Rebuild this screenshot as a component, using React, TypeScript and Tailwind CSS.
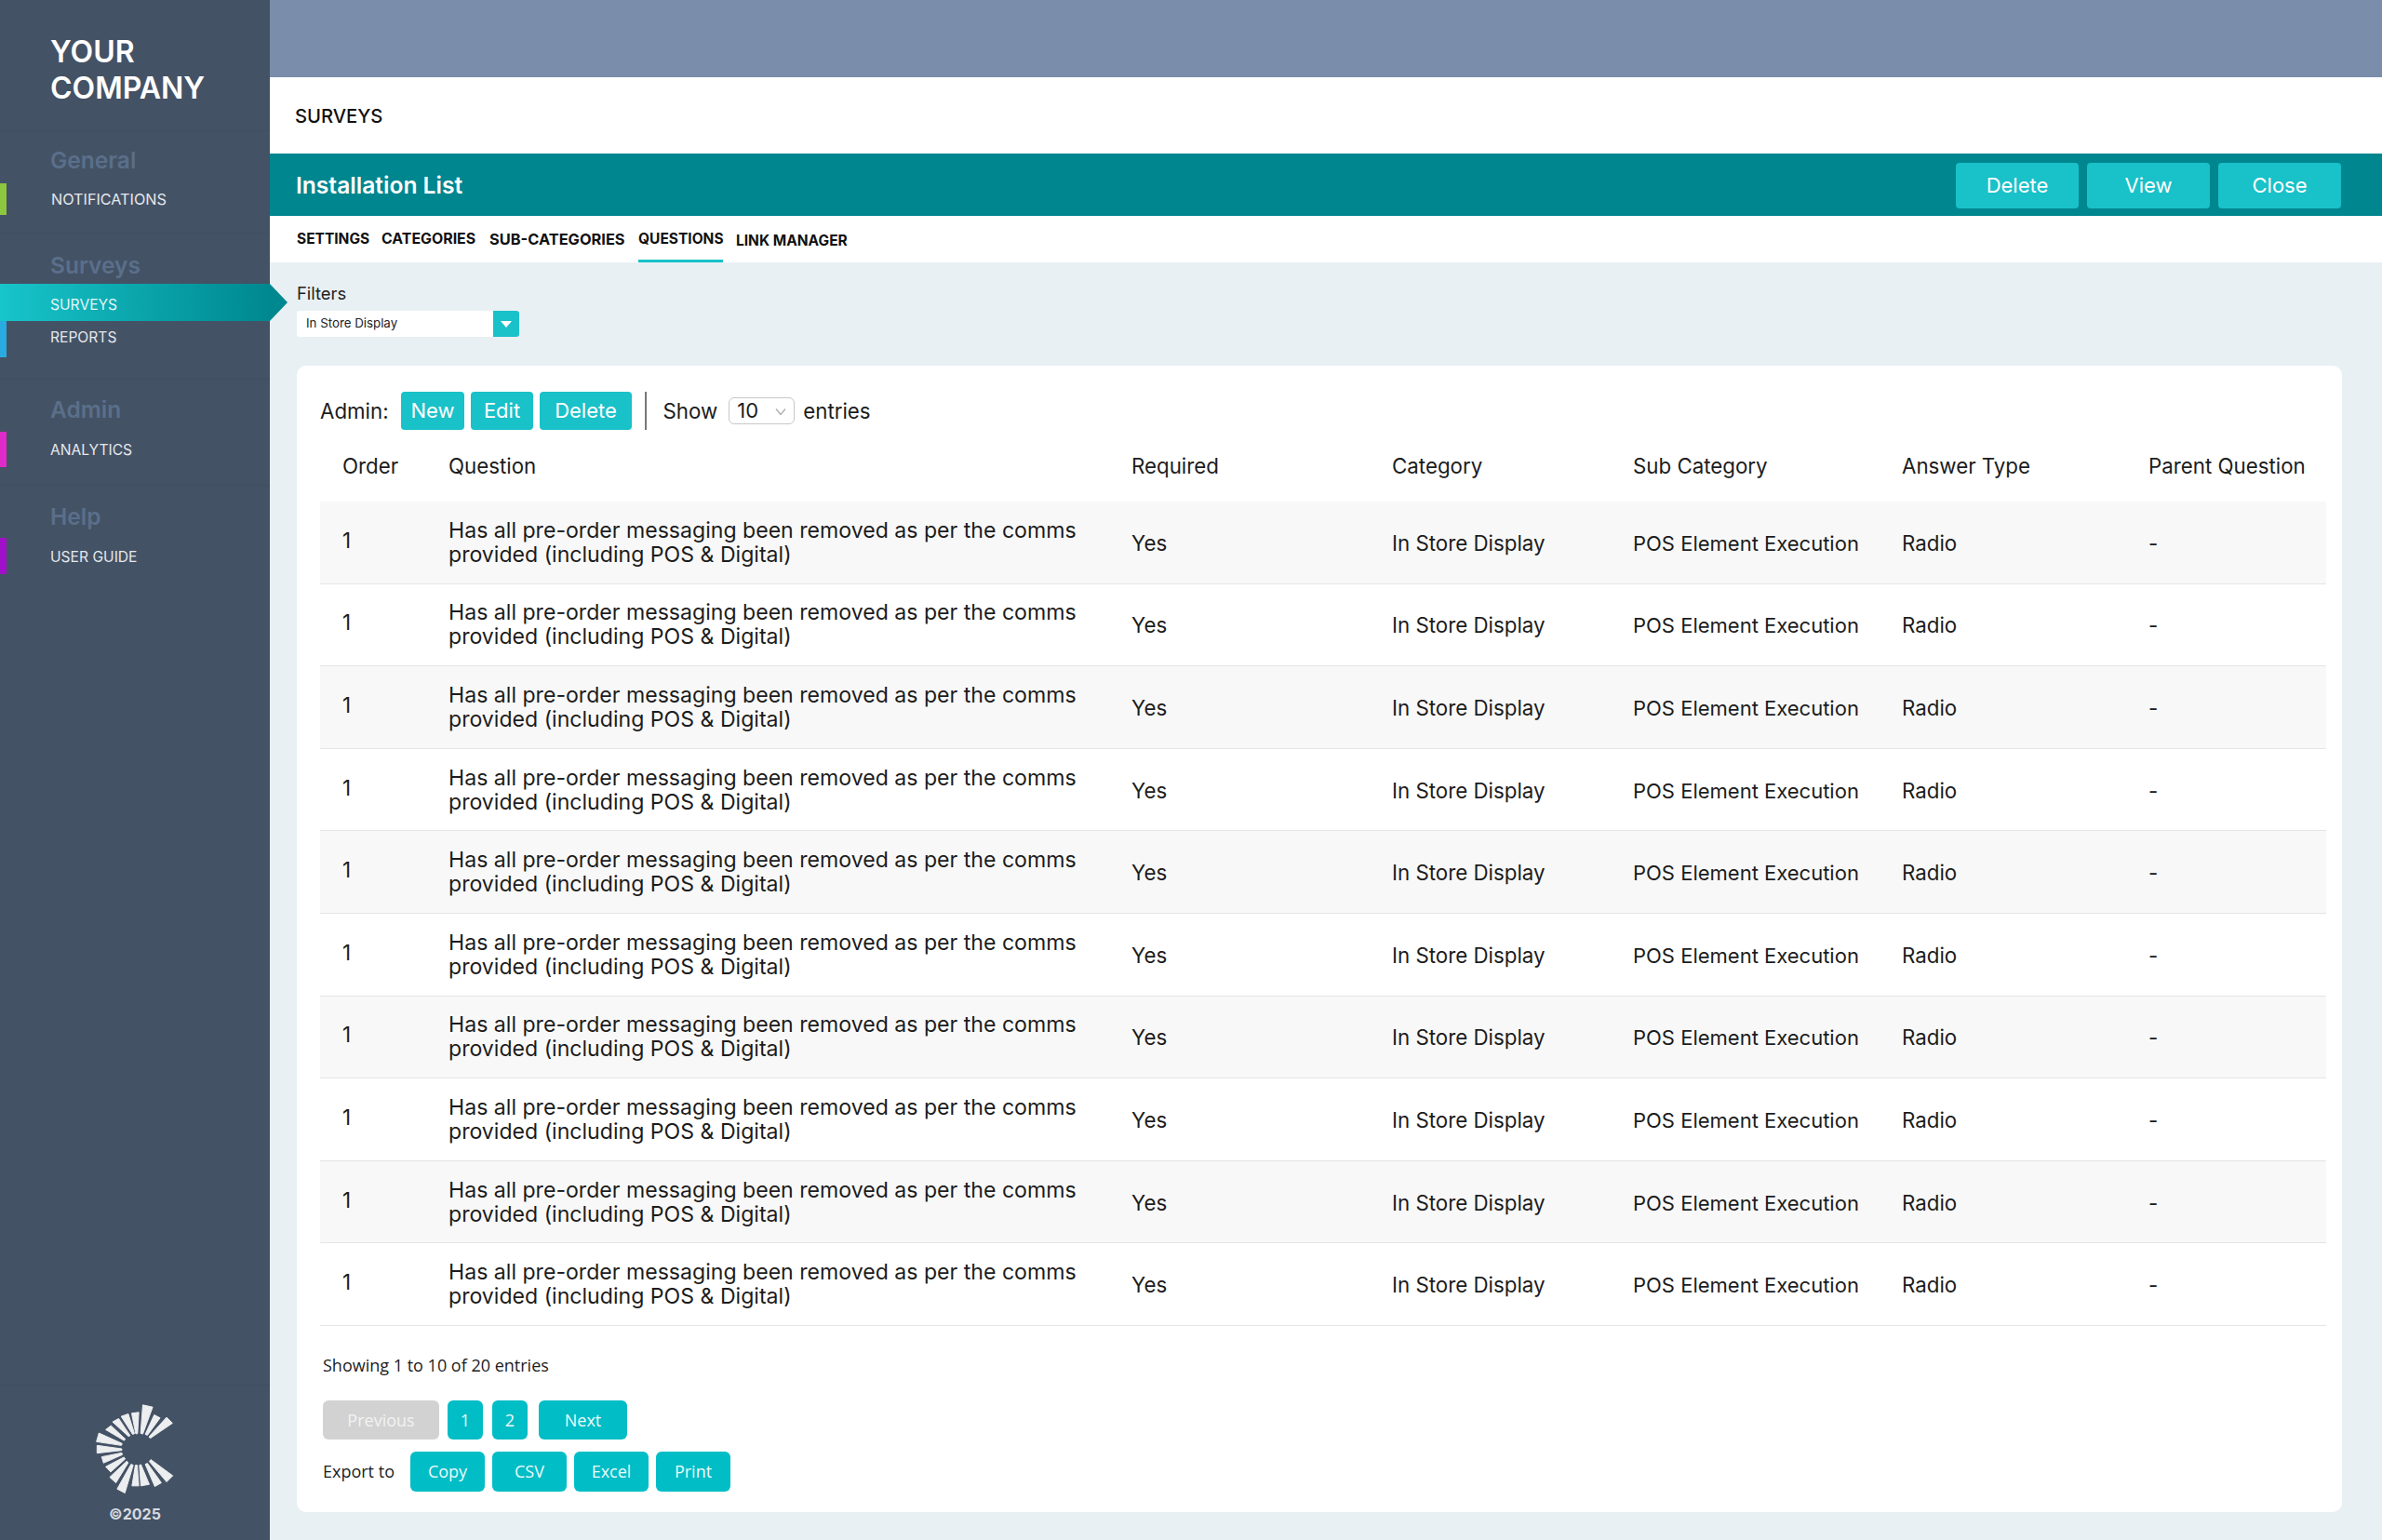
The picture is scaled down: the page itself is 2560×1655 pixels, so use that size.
const SANS = "font-['Inter',sans-serif]";

const ROWS = Array.from({ length: 10 }, (_, i) => i);

const COLS = "grid grid-cols-[114px_734px_280px_259px_289px_265px_1fr]";

const WEDGES = [
  "458,203 490,210 458,297 451,295",
  "495,235 514,245 473,301 466,298",
  "535,243 554,262 482,311 478,306",
  "422,230 445,227 441,296 435,296",
  "388,240 411,232 431,296 425,298",
  "360,258 380,247 417,302 412,305",
  "338,283 355,270 402,314 397,318",
  "316,294 391,328 389,334 308,322",
  "310,334 390,345 390,350 310,359",
  "325,371 390,358 392,364 331,391",
  "338,403 397,372 401,378 354,420",
  "351,437 406,385 411,390 371,455",
  "375,475 420,395 427,398 400,488",
  "423,465 434,398 440,398 445,465",
  "452,465 447,398 452,396 479,460",
  "497,467 518,455 473,392 466,395",
  "535,452 555,432 484,380 479,386",
];

function Logo() {
  return (
    <svg viewBox="300 195 265 300" className="h-[100px] w-[88px]">
      {WEDGES.map((p) => (
        <polygon key={p} points={p} fill="#eceef0" stroke="#eceef0" strokeWidth="3" strokeLinejoin="round" />
      ))}
    </svg>
  );
}

function NavGroup({
  title,
  className,
  children,
}: {
  title: string;
  className: string;
  children: React.ReactNode;
}) {
  return (
    <div className={`border-b border-[#3f4e62] ${className}`}>
      <div className="pl-[54px] text-[24.5px] leading-[30px] font-semibold text-[#5a6f8a]">{title}</div>
      {children}
    </div>
  );
}

function NavItem({ label, bar, className }: { label: string; bar: string; className: string }) {
  return (
    <div className={`relative flex items-center pl-[54px] text-[15.6px] text-[#e4e8ec] ${className}`}>
      <span className={`absolute left-0 top-0 bottom-0 w-[7px] ${bar}`} />
      {label}
    </div>
  );
}

function Sidebar() {
  return (
    <aside className="relative z-10 flex w-[290px] shrink-0 flex-col bg-[#445265]">
      <div className="h-[141px] shrink-0 border-b border-[#3f4e62] pl-[54px] pt-[36px] text-[32px] leading-[39px] font-semibold text-white">
        YOUR
        <br />
        COMPANY
      </div>
      <NavGroup title="General" className="h-[110px] shrink-0 pt-[16px]">
        <NavItem label="NOTIFICATIONS" bar="bg-[#8dc63f]" className="mt-[10px] h-[34px] pl-[55px] text-[16.2px]" />
      </NavGroup>
      <NavGroup title="Surveys" className="h-[157px] shrink-0 pt-[19px]">
        <div className="relative mt-[5px] flex h-[40px] items-center bg-gradient-to-r from-[#17c5ca] to-[#008890] pl-[54px] pt-[6px] text-[15.6px] text-[#e4f6f7]">
          SURVEYS
          <span className="absolute top-0 -right-[19px] h-0 w-0 border-y-[20px] border-l-[19px] border-y-transparent border-l-[#008890]" />
        </div>
        <NavItem label="REPORTS" bar="bg-[#29abe2]" className="h-[39px] pb-[3px]" />
      </NavGroup>
      <NavGroup title="Admin" className="h-[114px] shrink-0 pt-[17px]">
        <NavItem label="ANALYTICS" bar="bg-[#e02bc8]" className="mt-[9px] h-[38px] pt-[2px]" />
      </NavGroup>
      <div className="flex-1 pt-[18px]">
        <div className="pl-[54px] text-[24.5px] leading-[30px] font-semibold text-[#5a6f8a]">Help</div>
        <NavItem label="USER GUIDE" bar="bg-[#a010c8]" className="mt-[8px] h-[39px] pt-[2px]" />
      </div>
      <div className="flex h-[167px] shrink-0 flex-col items-center border-t border-[#3f4e62] pt-[18px]">
        <Logo />
        <div className="mt-[8px] text-[16px] font-bold text-[#d5dae0]">©2025</div>
      </div>
    </aside>
  );
}

function TealButton({ label, className }: { label: string; className: string }) {
  return (
    <button className={`flex items-center justify-center rounded-[4px] bg-[#19c1c9] text-white ${className}`}>
      {label}
    </button>
  );
}

function TealBtn({ label, className }: { label: string; className: string }) {
  return <button className={`rounded-[6px] bg-[#00bdc6] text-[#eefbfb] ${className}`}>{label}</button>;
}

function Cell({ children, className = "pt-[2px]" }: { children: React.ReactNode; className?: string }) {
  return <div className={`flex items-center whitespace-nowrap ${className}`}>{children}</div>;
}

function Table() {
  return (
    <div className="mt-[8px] text-[22.3px] leading-[26px] text-[#1c1c1c]">
      <div className={`${COLS} mb-[7px] h-[62px] items-center whitespace-nowrap pl-[24px]`}>
        <div>Order</div>
        <div>Question</div>
        <div>Required</div>
        <div>Category</div>
        <div>Sub Category</div>
        <div>Answer Type</div>
        <div>Parent Question</div>
      </div>
      {ROWS.map((i) => (
        <div
          key={i}
          className={`${COLS} h-[88.6px] border-b border-[#e3e5e7] pl-[24px] ${i % 2 === 0 ? "bg-[#f8f8f8]" : "bg-white"}`}
        >
          <Cell className="pb-[4px]">1</Cell>
          <div className="flex items-center">
            <span className="w-[720px] text-[23.1px]">
              Has all pre-order messaging been removed as per the comms provided (including POS &amp; Digital)
            </span>
          </div>
          <Cell>Yes</Cell>
          <Cell>In Store Display</Cell>
          <Cell className="pt-[2px] text-[22px]">POS Element Execution</Cell>
          <Cell>Radio</Cell>
          <Cell>-</Cell>
        </div>
      ))}
    </div>
  );
}

export default function App() {
  return (
    <div className={`flex h-[1655px] w-[2560px] overflow-hidden bg-[#e9f0f4] ${SANS}`}>
      <Sidebar />
      <main className="flex min-w-0 flex-1 flex-col">
        <div className="h-[83px] shrink-0 bg-[#7a8daa]" />
        <div className="flex h-[82px] shrink-0 items-center bg-white pl-[27px] pt-[3px] text-[20.2px] font-medium text-[#111]">
          SURVEYS
        </div>
        <div className="flex h-[67px] shrink-0 items-center justify-between bg-[#00868f] pl-[28px] pr-[44px] pt-[1px]">
          <div className="text-[24.6px] font-semibold text-white">Installation List</div>
          <div className="flex gap-[9px] text-[22px]">
            <TealButton label="Delete" className="h-[49px] w-[132px]" />
            <TealButton label="View" className="h-[49px] w-[132px]" />
            <TealButton label="Close" className="h-[49px] w-[132px]" />
          </div>
        </div>
        <div className="flex h-[50px] shrink-0 items-center bg-white pl-[29px] text-[15.5px] font-bold text-[#111]">
          <span className="w-[91px]">SETTINGS</span>
          <span className="w-[116px] text-[15.9px]">CATEGORIES</span>
          <span className="w-[160px] text-[16.4px]">SUB-CATEGORIES</span>
          <span className="relative flex h-full w-[105px] items-center">
            QUESTIONS
            <span className="absolute bottom-0 left-0 h-[3px] w-[91px] bg-[#19c1c9]" />
          </span>
          <span className="pt-[4px]">LINK MANAGER</span>
        </div>
        <div className="flex flex-1 flex-col pl-[29px] pr-[43px]">
          <div className="mt-[21px] text-[18.4px] leading-[24px] text-[#222]">Filters</div>
          <div className="mt-[7px] flex h-[28px] w-[239px] items-center justify-between rounded-[3px] bg-white pl-[10px] text-[13.3px] text-[#222]">
            In Store Display
            <span className="flex h-[28px] w-[28px] items-center justify-center rounded-r-[3px] bg-[#19c1c9]">
              <span className="h-0 w-0 border-x-[6px] border-t-[7px] border-x-transparent border-t-white" />
            </span>
          </div>
          <section className="mt-[31px] h-[1232px] rounded-[10px] bg-white pl-[25px] pr-[17px] pt-[28px]">
            <div className="flex h-[41px] items-center text-[22.3px] text-[#1c1c1c]">
              <span className="w-[87px]">Admin:</span>
              <div className="flex gap-[7px] text-[22px]">
                <TealButton label="New" className="h-[41px] w-[68px]" />
                <TealButton label="Edit" className="h-[41px] w-[67px]" />
                <TealButton label="Delete" className="h-[41px] w-[99px]" />
              </div>
              <span className="ml-[14px] h-[41px] w-[1.5px] bg-[#777]" />
              <span className="ml-[18px]">Show</span>
              <div className="ml-[12px] flex h-[29px] w-[71px] items-center justify-between rounded-[6px] border border-[#c8c8c8] pl-[8px] pr-[8px] text-[22px]">
                10
                <svg viewBox="0 0 12 12" className="h-[12px] w-[12px]" fill="none" stroke="#aaa" strokeWidth="1.2">
                  <path d="M1 3.5 6 9.5 11 3.5" />
                </svg>
              </div>
              <span className="ml-[9px]">entries</span>
            </div>
            <Table />
            <div className="mt-[30px] font-['Open_Sans',sans-serif] text-[18px] leading-[24px] text-[#1c1c1c]">
              <div className="pl-[3px]">Showing 1 to 10 of 20 entries</div>
              <div className="mt-[26px] flex h-[42px] pl-[3px] text-[18px]">
                <button className="h-full w-[125px] rounded-[6px] bg-[#d2d2d2] text-[#f2f2f2]">Previous</button>
                <TealBtn className="ml-[9px] w-[38px]" label="1" />
                <TealBtn className="ml-[10px] w-[38px]" label="2" />
                <TealBtn className="ml-[12px] w-[95px]" label="Next" />
              </div>
              <div className="mt-[13px] flex h-[43px] items-center pl-[3px] text-[18px]">
                <span className="w-[94px]">Export to</span>
                <div className="flex gap-[8px]">
                  <TealBtn className="h-[43px] w-[80px]" label="Copy" />
                  <TealBtn className="h-[43px] w-[80px]" label="CSV" />
                  <TealBtn className="h-[43px] w-[80px]" label="Excel" />
                  <TealBtn className="h-[43px] w-[80px]" label="Print" />
                </div>
              </div>
            </div>
          </section>
        </div>
      </main>
    </div>
  );
}
